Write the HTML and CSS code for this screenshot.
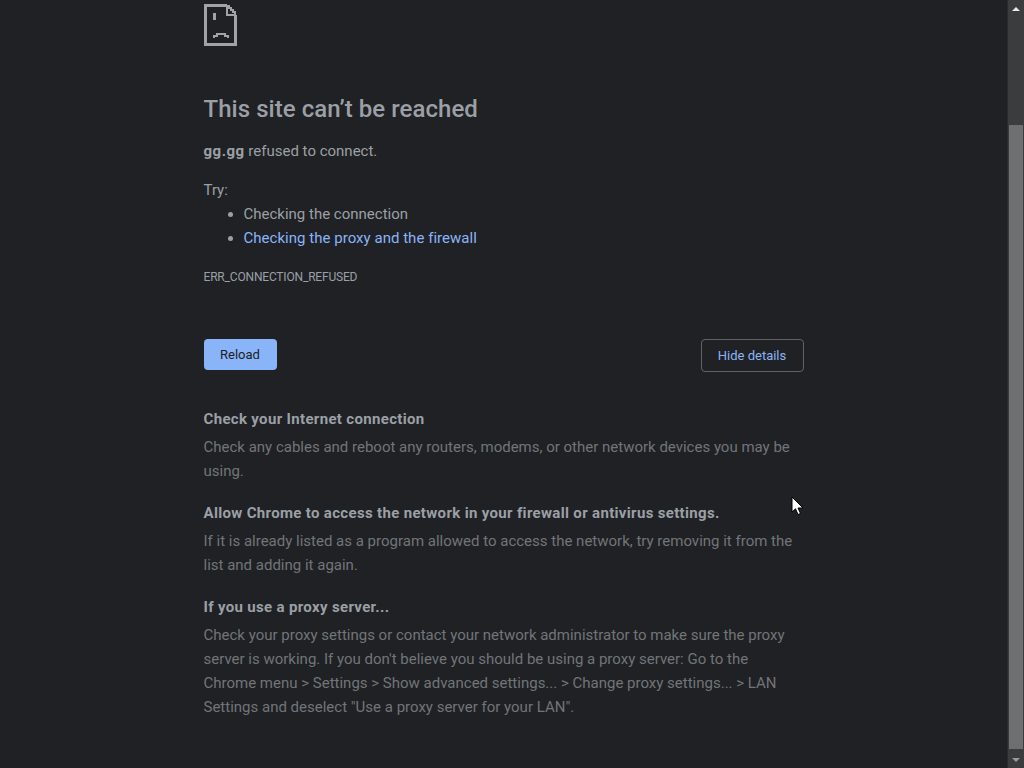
FILE: index.html
```html
<!DOCTYPE html>
<html lang="en">
<head>
  <meta charset="UTF-8" />
  <title>gg.gg</title>
  <link rel="stylesheet" href="styles.css">
</head>
<body>
  <div class="window">
    <div class="page">
      <div class="container">
        <!-- Sad page icon -->
        <svg class="sad-icon" width="34" height="42" viewBox="0 0 34 42" fill="none" stroke="#a0a4a7" stroke-width="3" shape-rendering="crispEdges">
          <path d="M23 1.5H1.5V40.5H31.5V11" />
          <path d="M23 1V11H32" stroke-width="2" />
          <path d="M23 2H25V4H27V6H29V8H31V10" stroke-width="2" />
          <path d="M10.5 9V16" />
          <path d="M10 34V32H13V30H21V32H24V34" stroke-width="2" />
        </svg>

        <h1>This site can’t be reached</h1>
        <p class="summary"><strong>gg.gg</strong> refused to connect.</p>

        <div class="suggestions">
          <p>Try:</p>
          <ul>
            <li>Checking the connection</li>
            <li><a href="#">Checking the proxy and the firewall</a></li>
          </ul>
        </div>

        <div class="error-code">ERR_CONNECTION_REFUSED</div>

        <div class="buttons">
          <button class="reload">Reload</button>
          <button class="details">Hide details</button>
        </div>

        <!-- Details -->
        <div class="section">
          <h2>Check your Internet connection</h2>
          <p>Check any cables and reboot any routers, modems, or other network devices you may be using.</p>
        </div>
        <div class="section">
          <h2>Allow Chrome to access the network in your firewall or antivirus settings.</h2>
          <p>If it is already listed as a program allowed to access the network, try removing it from the list and adding it again.</p>
        </div>
        <div class="section">
          <h2>If you use a proxy server...</h2>
          <p>Check your proxy settings or contact your network administrator to make sure the proxy server is working. If you don't believe you should be using a proxy server: Go to the Chrome menu &gt; Settings &gt; Show advanced settings... &gt; Change proxy settings... &gt; LAN Settings and deselect "Use a proxy server for your LAN".</p>
        </div>
      </div>
    </div>

    <!-- Scrollbar -->
    <div class="scrollbar">
      <div class="arrow arrow-up"></div>
      <div class="track"><div class="thumb"></div></div>
      <div class="arrow arrow-down"></div>
    </div>
  </div>

  <svg class="cursor" width="13" height="20" viewBox="0 0 13 20">
    <path d="M1 1V16L4.5 12.8L7 18.5L9.5 17.5L7 12H12Z" fill="#fff" stroke="#000" stroke-width="1" />
  </svg>
</body>
</html>
```

FILE: styles.css
```css
html, body {
  margin: 0;
  padding: 0;
  height: 100%;
  overflow: hidden;
}
body {
  font-family: Roboto, "Liberation Sans", sans-serif;
  font-size: 15px;
  background: #202124;
  color: #9aa0a6;
}
.window {
  display: flex;
  height: 768px;
}
.page {
  flex: 1;
  padding-top: 4px;
}
.container {
  width: 600px;
  margin: 0 auto;
}
.sad-icon {
  display: block;
}
h1 {
  margin: 47px 0 0;
  font-size: 24px;
  line-height: 32px;
  font-weight: 500;
  letter-spacing: 0.05px;
  color: #9aa0a6;
}
.summary {
  margin: 14px 0 0;
  line-height: 24px;
}
.summary strong {
  font-weight: 700;
  letter-spacing: 0.5px;
}
.suggestions {
  margin-top: 15px;
}
.suggestions p {
  margin: 0;
  line-height: 24px;
}
.suggestions ul {
  margin: 0;
  padding-left: 40px;
}
.suggestions li {
  line-height: 24px;
}
.suggestions a {
  color: #8ab4f8;
  text-decoration: none;
  letter-spacing: 0.03px;
}
.error-code {
  margin-top: 19px;
  font-size: 12px;
  line-height: 16px;
  letter-spacing: -0.18px;
  color: #9aa0a6;
  text-transform: uppercase;
}
.buttons {
  display: flex;
  justify-content: space-between;
  align-items: flex-start;
  margin-top: 54px;
  margin-bottom: 35px;
}
button {
  font-family: Roboto, "Liberation Sans", sans-serif;
  font-size: 13px;
  border-radius: 4px;
  cursor: pointer;
}
.reload {
  width: 73px;
  height: 31px;
  padding: 0;
  border: none;
  background: #8ab4f8;
  color: #202124;
}
.details {
  width: 103px;
  height: 33px;
  padding: 0;
  background: transparent;
  border: 1px solid #5f6368;
  color: #8ab4f8;
}
.section {
  margin-top: 18px;
}
h2 {
  margin: 0;
  font-size: 15px;
  line-height: 24px;
  font-weight: 700;
  letter-spacing: 0.33px;
  color: #9aa0a6;
}
.section p {
  margin: 4px 0 0;
  line-height: 24px;
  color: #717579;
}
.scrollbar {
  width: 17px;
  display: flex;
  flex-direction: column;
  background: #3b3c3e;
  border-left: 1px solid #2a2b2d;
  box-sizing: border-box;
}
.arrow {
  height: 17px;
  flex: none;
  display: flex;
  align-items: center;
  justify-content: center;
}
.arrow::before {
  content: "";
  border-left: 4px solid transparent;
  border-right: 4px solid transparent;
}
.arrow-up::before {
  border-bottom: 4px solid #e8e8e8;
}
.arrow-down::before {
  border-top: 4px solid #9a9a9a;
}
.track {
  flex: 1;
  padding-top: 108px;
}
.thumb {
  height: 624px;
  margin: 0 1px;
  background: #6e6f70;
}
.cursor {
  position: absolute;
  left: 791px;
  top: 496px;
}
```
